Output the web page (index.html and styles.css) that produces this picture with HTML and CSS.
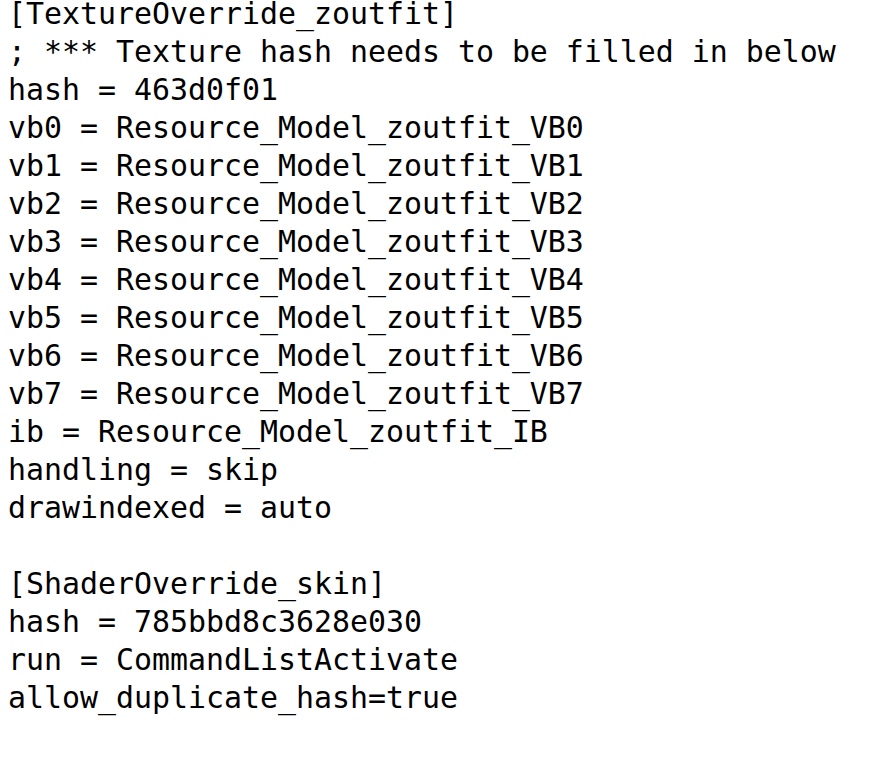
FILE: index.html
```html
<!DOCTYPE html>
<html>
<head>
<meta charset="utf-8">
<link rel="stylesheet" href="styles.css">
</head>
<body>
<pre class="code">[TextureOverride_zoutfit]
; *** Texture hash needs to be filled in below
hash = 463d0f01
vb0 = Resource_Model_zoutfit_VB0
vb1 = Resource_Model_zoutfit_VB1
vb2 = Resource_Model_zoutfit_VB2
vb3 = Resource_Model_zoutfit_VB3
vb4 = Resource_Model_zoutfit_VB4
vb5 = Resource_Model_zoutfit_VB5
vb6 = Resource_Model_zoutfit_VB6
vb7 = Resource_Model_zoutfit_VB7
ib = Resource_Model_zoutfit_IB
handling = skip
drawindexed = auto

[ShaderOverride_skin]
hash = 785bbd8c3628e030
run = CommandListActivate
allow_duplicate_hash=true</pre>
</body>
</html>
```
FILE: styles.css
```css
html, body {
  margin: 0;
  padding: 0;
  background: #ffffff;
}
.code {
  margin: -5px 0 0 0;
  padding: 0 0 0 8px;
  font-family: "DejaVu Sans Mono", "Liberation Mono", monospace;
  font-size: 29.9px;
  line-height: 38px;
  color: #000000;
  white-space: pre;
}
```
